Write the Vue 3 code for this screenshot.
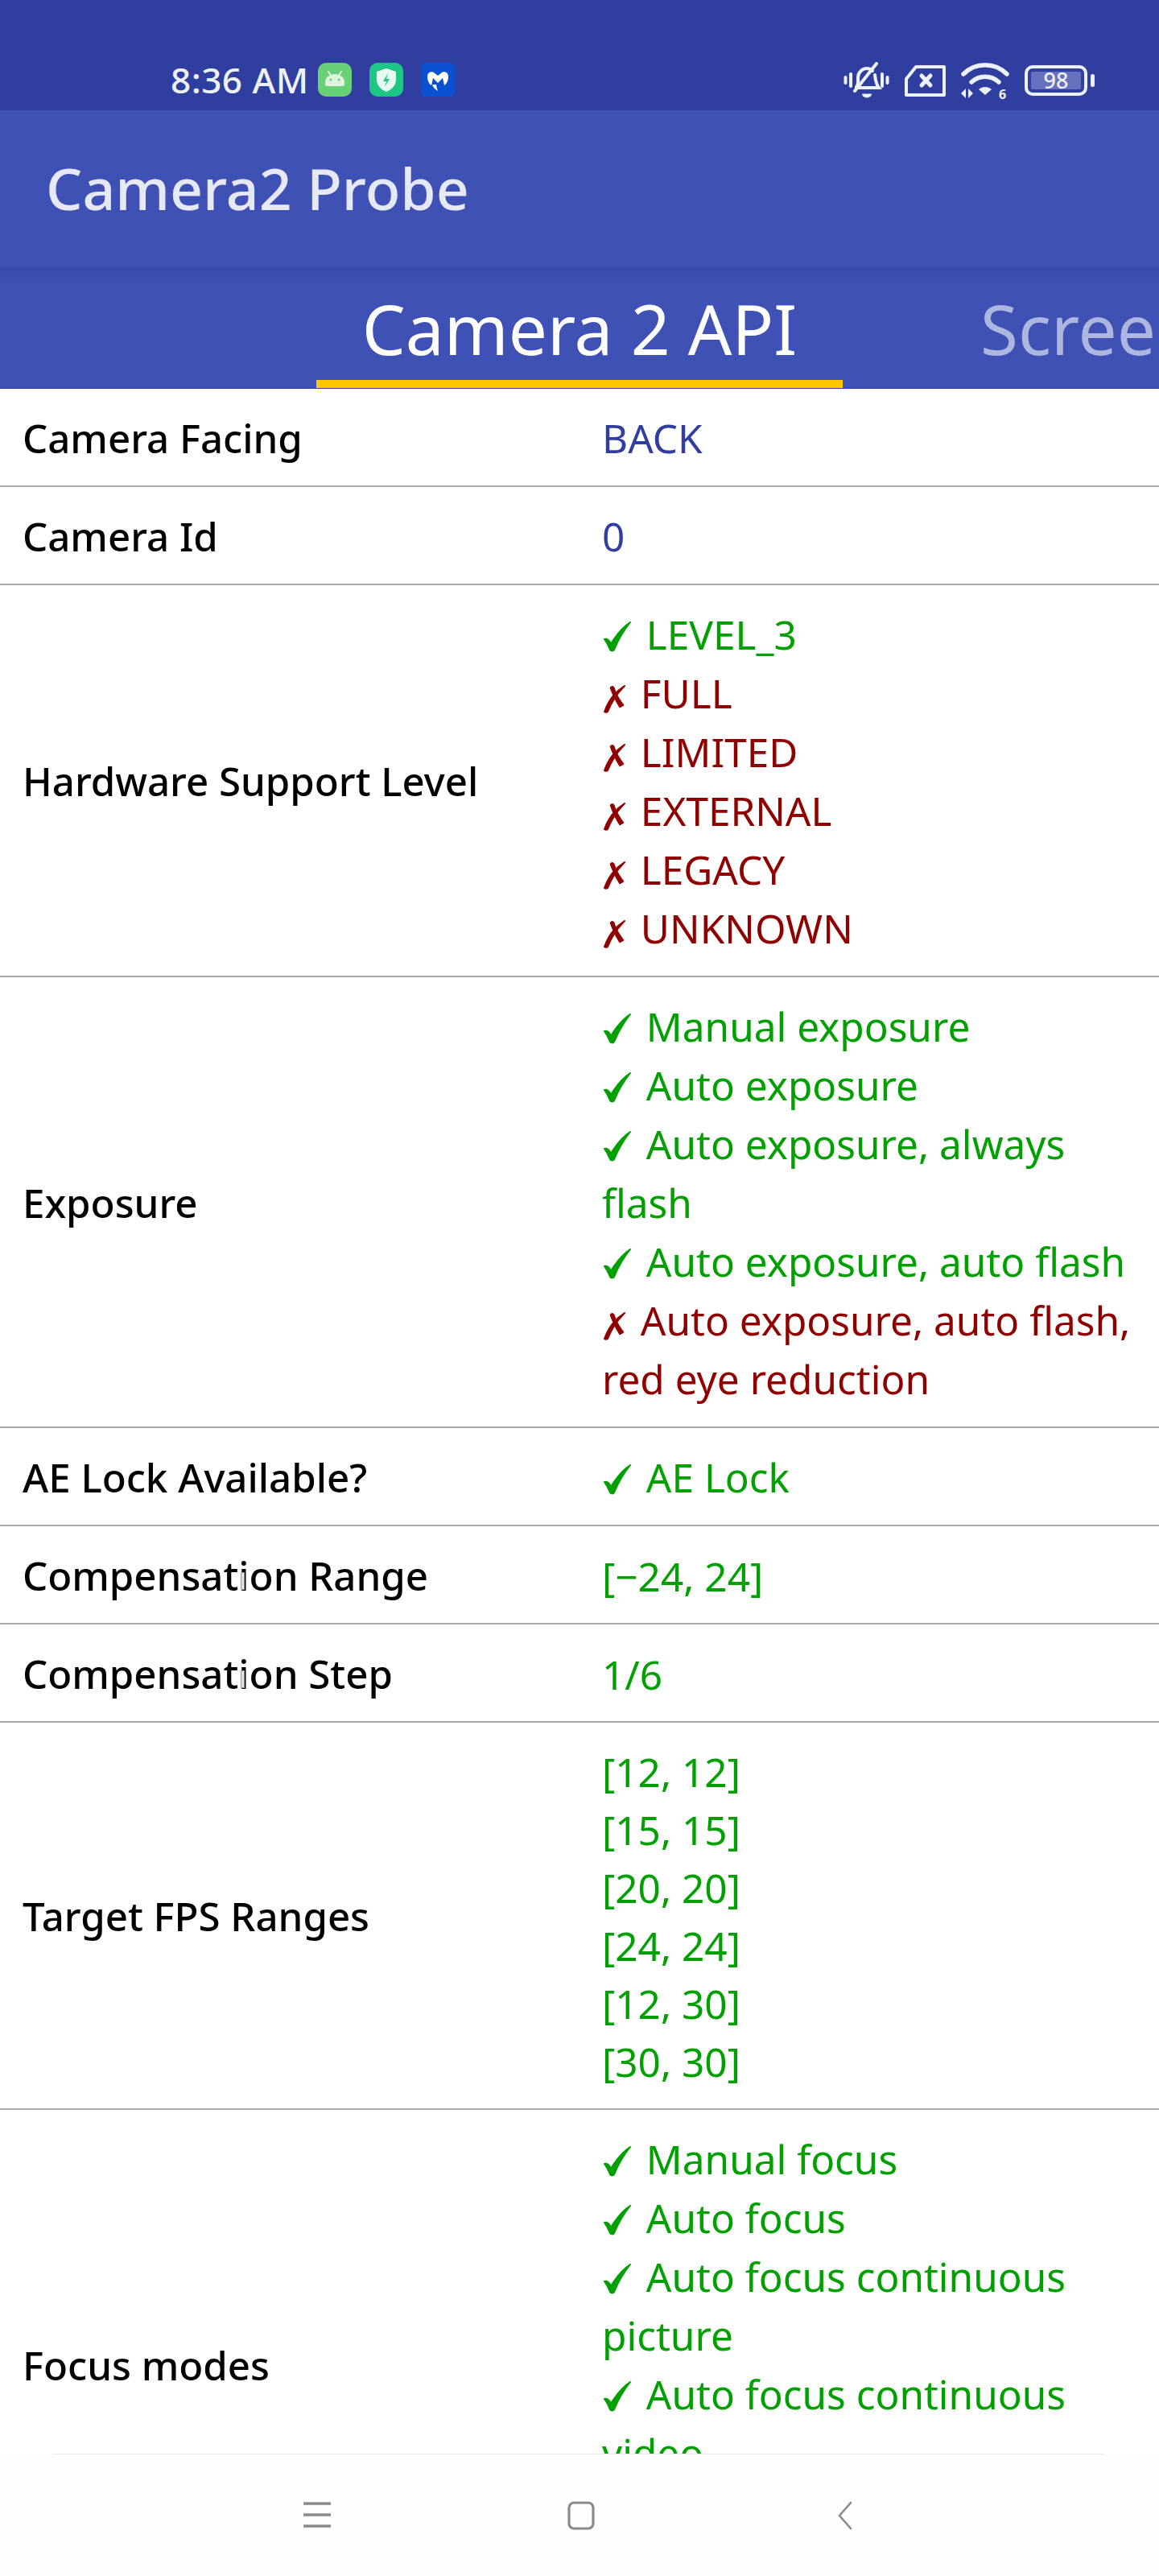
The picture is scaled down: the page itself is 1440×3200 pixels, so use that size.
<script setup>
const G = 'ok', R = 'no'
const rows = [
  { label: 'Camera Facing', tone: 'plain', lines: [{ t: 'BACK' }] },
  { label: 'Camera Id', tone: 'plain', lines: [{ t: '0' }] },
  { label: 'Hardware Support Level', lines: [
    { m: G, t: 'LEVEL_3' }, { m: R, t: 'FULL' }, { m: R, t: 'LIMITED' },
    { m: R, t: 'EXTERNAL' }, { m: R, t: 'LEGACY' }, { m: R, t: 'UNKNOWN' } ] },
  { label: 'Exposure', lines: [
    { m: G, t: 'Manual exposure' }, { m: G, t: 'Auto exposure' },
    { m: G, t: 'Auto exposure, always flash' }, { m: G, t: 'Auto exposure, auto flash' },
    { m: R, t: 'Auto exposure, auto flash, red eye reduction' } ] },
  { label: 'AE Lock Available?', lines: [{ m: G, t: 'AE Lock' }] },
  { label: 'Compensation Range', caret: true, tone: 'green', lines: [{ t: '[−24, 24]' }] },
  { label: 'Compensation Step', caret: true, tone: 'green', lines: [{ t: '1/6' }] },
  { label: 'Target FPS Ranges', tone: 'green', lines: [
    { t: '[12, 12]' }, { t: '[15, 15]' }, { t: '[20, 20]' },
    { t: '[24, 24]' }, { t: '[12, 30]' }, { t: '[30, 30]' } ] },
  { label: 'Focus modes', tall: true, lines: [
    { m: G, t: 'Manual focus' }, { m: G, t: 'Auto focus' },
    { m: G, t: 'Auto focus continuous picture' }, { m: G, t: 'Auto focus continuous video' } ] },
]
</script>

<template>
  <div class="phone">
    <header class="status">
      <div class="status-left">
        <span class="time">8:36 AM</span>
        <span class="app app-android">
          <svg viewBox="0 0 42 42" width="42" height="42">
            <path d="M9 27v-3a12 10 0 0 1 24 0v3a2 2 0 0 1-2 2H11a2 2 0 0 1-2-2z" fill="#dff5df" />
            <path d="M13 11l3 5M29 11l-3 5" stroke="#dff5df" stroke-width="2" stroke-linecap="round" />
            <circle cx="16" cy="21" r="1.5" fill="#68d077" /><circle cx="26" cy="21" r="1.5" fill="#68d077" />
          </svg>
        </span>
        <span class="app app-shield">
          <svg viewBox="0 0 42 42" width="42" height="42">
            <path d="M21 7l12 4v10c0 7-5 12-12 15C14 33 9 28 9 21V11z" fill="#e6faf2" />
            <path d="M23 13l-6 10h4l-2 7 6-10h-4z" fill="#1ec686" />
          </svg>
        </span>
        <span class="app app-mb">
          <svg viewBox="0 0 42 42" width="42" height="42">
            <path d="M8 17c0-5 5-7 8-5l5 4 5-4c3-2 8 0 8 5 0 5-2 9-5 11l-2-9-6 6-6-6-2 9c-3-2-5-6-5-11z" fill="#fff" />
            <path d="M14 27c1 4 4 6 7 8-1-3-2-6-2-8z" fill="#fff" />
          </svg>
        </span>
      </div>
      <div class="status-right">
        <svg class="ic-mute" viewBox="0 0 57 46" width="57" height="46" fill="none" stroke="#eef0fa" stroke-width="4" stroke-linecap="round">
          <path d="M2.500 19v7M9 15v15M48 15v15M54.500 19v7" />
          <path d="M16 31c3-3 2-6 2-11 0-7 5-12 11-12 3 0 5 1 7 3M39 16c1 7 1 11 5 16H16" />
          <path d="M14 36L41 2" />
          <path d="M23 39.500a6 5 0 0 0 12 0z" fill="#eef0fa" stroke="none" />
        </svg>
        <svg class="ic-sim" viewBox="0 0 51 39" width="51" height="39" fill="none" stroke="#eef0fa" stroke-width="4" stroke-linejoin="round">
          <path d="M2 17L14 2h35v35H2z" />
          <path d="M21 13l11 12M32 13L21 25" stroke-width="5" stroke-linecap="round" />
        </svg>
        <svg class="ic-wifi" viewBox="0 0 60 46" width="60" height="46" fill="none" stroke="#eef0fa" stroke-linecap="round">
          <path d="M3 15C18 0 42 0 57 15" stroke-width="5.500" />
          <path d="M13 25c10-9 24-9 34 0" stroke-width="5.500" />
          <path d="M22 34c5-4 11-4 16 0l-8 7z" fill="#eef0fa" stroke="none" />
          <path d="M6 33v12L0 39zM9 33l6 6-6 6z" fill="#eef0fa" stroke="none" />
          <text x="47" y="46" class="wifi-six">6</text>
        </svg>
        <div class="battery">
          <div class="battery-shell"><span class="battery-level">98</span></div>
          <span class="battery-nub"></span>
        </div>
      </div>
    </header>

    <div class="appbar"><h1 class="title">Camera2 Probe</h1></div>

    <nav class="tabs">
      <span class="tab tab-active">Camera 2 API</span>
      <span class="tab">Screen</span>
    </nav>

    <main class="content">
      <div v-for="row in rows" :key="row.label" class="row" :class="{ 'row-tall': row.tall }">
        <div class="label">
          {{ row.label }}
          <i v-if="row.caret" class="caret"></i>
        </div>
        <div class="value" :class="row.tone">
          <div v-for="line in row.lines" :key="line.t" class="line" :class="line.m">
            <svg v-if="line.m === 'ok'" class="mark mark-ok" viewBox="0 0 36 38" width="36" height="38">
              <path d="M2 22c3-1 6 1 8 6C16 18 23 8 34 1c-8 10-15 22-20 34-1 2-4 2-5 0-2-5-4-9-7-13z" fill="currentColor" stroke="currentColor" stroke-width="2" stroke-linejoin="round" />
            </svg>
            <svg v-else-if="line.m === 'no'" class="mark mark-no" viewBox="0 0 28 35" width="28" height="35">
              <path d="M8 3c2-2 4-2 5 0 2 7 6 14 12 22l-5 3C15 20 11 12 8 3z" fill="currentColor" stroke="currentColor" stroke-width="1" />
              <path d="M26 1C19 8 10 20 5 33c-1 1-3 1-4 0C6 19 15 8 26 1z" fill="currentColor" stroke="currentColor" stroke-width="2" stroke-linejoin="round" />
            </svg>
            {{ line.t }}
          </div>
        </div>
      </div>
    </main>

    <footer class="navbar">
      <div class="nav-icons">
        <svg viewBox="0 0 34 34" width="34" height="34" fill="none" stroke="#8a8a8a" stroke-width="3.4">
          <path d="M0 3h34M0 17h34M0 31h34" />
        </svg>
        <svg viewBox="0 0 34 36" width="34" height="36" fill="none" stroke="#8a8a8a" stroke-width="3.2">
          <rect x="2" y="2" width="30" height="32" rx="6" />
        </svg>
        <svg viewBox="0 0 34 36" width="34" height="36" fill="none" stroke="#8a8a8a" stroke-width="2.6" stroke-linecap="round">
          <path d="M24 2L10 18l14 16" />
        </svg>
      </div>
    </footer>
  </div>
</template>

<style>
html, body { margin: 0; background: #fff; }
</style>

<style scoped>
.phone {
  width: 1440px;
  height: 3200px;
  display: flex;
  flex-direction: column;
  overflow: hidden;
  background: #fff;
  font-family: "Noto Sans", "Lato", "DejaVu Sans", sans-serif;
}
.status {
  height: 137px;
  flex: none;
  box-sizing: border-box;
  padding: 77px 80px 0 212px;
  background: #303f9f;
  display: flex;
  justify-content: space-between;
  align-items: flex-start;
}
.status-left { display: flex; align-items: center; height: 44px; }
.time { font-size: 44px; line-height: 44px; font-weight: 500; letter-spacing: .5px; color: #eef0fa; width: 183px; white-space: nowrap; }
.app { width: 42px; height: 42px; border-radius: 10px; margin-right: 22px; display: block; }
.app svg { display: block; }
.app-android { background: #68d077; }
.app-shield { background: #1ec686; }
.app-mb { background: #0a50d2; border-radius: 6px; }
.status-right { display: flex; align-items: center; height: 46px; gap: 19px; }
.status-right svg { flex: none; }
.wifi-six { font: 700 16px "Noto Sans", sans-serif; fill: #eef0fa; stroke: none; }
.battery { display: flex; align-items: center; gap: 4px; }
.battery-shell {
  width: 78px; height: 38px; box-sizing: border-box;
  border: 4px solid #eef0fa; border-radius: 10px;
  padding: 4px;
  display: flex;
}
.battery-level {
  flex: 1; background: #6672bd; border-radius: 2px; color: #eef0fa;
  font-size: 27px; line-height: 22px; text-align: center; font-weight: 500;
}
.battery-nub { width: 5px; height: 16px; background: #eef0fa; border-radius: 3px; }

.appbar {
  height: 196px; flex: none; box-sizing: border-box;
  background: #3f51b5;
  padding-left: 57px;
  display: flex; align-items: center;
}
.title { margin: 0 0 3px; font-size: 71.5px; font-weight: 500; color: #e6e8f5; white-space: nowrap; }

.tabs {
  height: 150px; flex: none; box-sizing: border-box;
  background: linear-gradient(#394aa8 0, #3f51b5 16px);
  padding-left: 393px;
  display: flex; overflow: hidden;
  border-bottom: 1px solid #34449f;
}
.tab {
  flex: none; width: 654px; margin-right: 171px;
  height: 149px; box-sizing: border-box;
  padding-bottom: 24px;
  display: flex; align-items: flex-end; justify-content: center;
  font-size: 85.5px; line-height: 100px; color: #adb6de; white-space: nowrap;
}
.tab:last-child { justify-content: flex-start; width: auto; margin: 0; }
.tab-active { color: #fff; border-bottom: 10px solid #ffc800; padding-bottom: 14px; }

.content { flex: 1; min-height: 0; overflow: hidden; }
.row {
  display: flex;
  align-items: center;
  box-sizing: border-box;
  padding: 0 20px 0 28px;
  border-bottom: 2px solid #aaa;
  min-height: 122px;
}
.label {
  flex: none; width: 720px; position: relative;
  font-size: 49.2px; line-height: 73px; font-weight: 500; color: #000;
}
.value {
  flex: 1; min-width: 0; padding: 25px 0 22px;
  font-size: 49.5px; line-height: 73px; color: #00a000;
}
.plain { color: #303f9f; }
.green { color: #00a000; line-height: 72px; }
.ok { color: #00a000; }
.no { color: #900000; }
.mark { display: inline; }
.mark-ok { vertical-align: -3px; margin: 0 5px 0 1px; }
.mark-no { vertical-align: -6px; margin: 0 5px 0 2px; }
.row-tall { min-height: 632px; border-bottom: 0; }
.row-tall .value { align-self: flex-start; }
.caret {
  position: absolute; left: 271px; top: 33px;
  box-sizing: border-box;
  width: 5px; height: 22px; background: #e2e2e2; border: 1px solid #999;
}

.navbar { height: 152px; flex: none; box-sizing: border-box; background: #fefefe; padding: 0 69px 0 65px; }
.nav-icons {
  border-top: 1px solid #e8e8e8; height: 100%; box-sizing: border-box;
  padding: 58px 304px 0 312px;
  display: flex; justify-content: space-between; align-items: flex-start;
}
</style>
